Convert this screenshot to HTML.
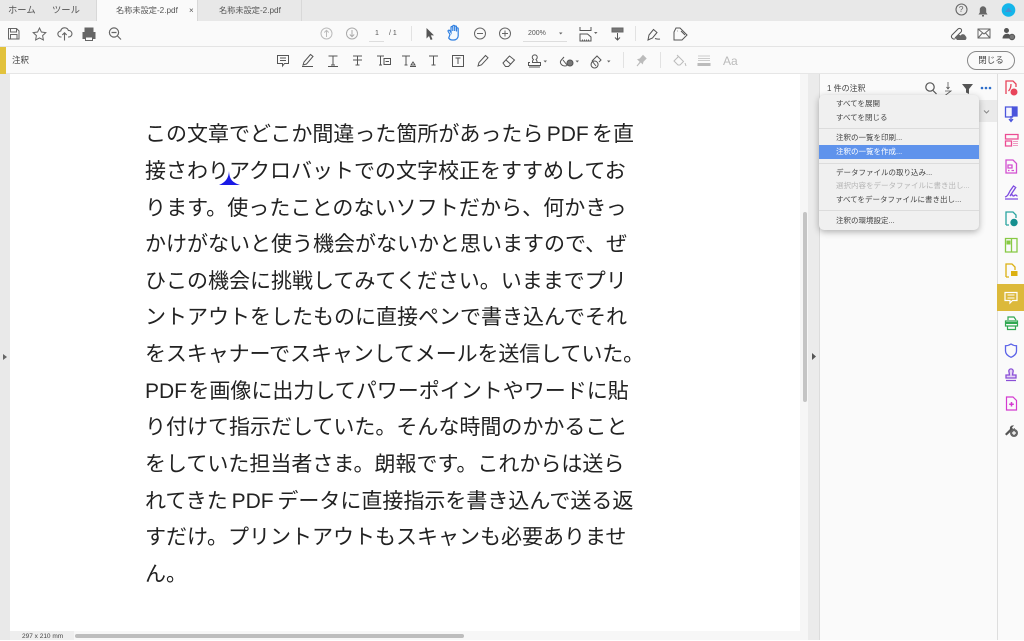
<!DOCTYPE html>
<html lang="ja"><head><meta charset="utf-8"><style>
html,body{margin:0;padding:0;width:1024px;height:640px;overflow:hidden;background:#fff;font-family:"Liberation Sans","Noto Sans CJK JP",sans-serif}
.a{position:absolute}
.t{position:absolute;white-space:nowrap}
.l{position:absolute;left:145px;white-space:nowrap;font-size:21px;line-height:36px;color:#222;font-family:"Liberation Sans","Noto Sans CJK JP",sans-serif}
.m{position:absolute;left:836px;white-space:nowrap;font-size:7.5px;line-height:12px;color:#444}
svg{position:absolute;left:0;top:0}
</style></head><body>
<div class="a" style="left:0;top:0;width:1024px;height:21px;background:#e8e8e8"></div>
<div class="a" style="left:96px;top:0;width:102px;height:21px;background:#fafafa;border-left:1px solid #d8d8d8;border-right:1px solid #d8d8d8;box-sizing:border-box"></div>
<div class="a" style="left:301px;top:0;width:1px;height:21px;background:#d8d8d8"></div>
<div class="t" style="left:8px;top:3px;font-size:9.3px;line-height:14px;color:#555">ホーム</div>
<div class="t" style="left:52px;top:3px;font-size:9.3px;line-height:14px;color:#555">ツール</div>
<div class="t" style="left:116px;top:4px;font-size:8.2px;line-height:13px;color:#555">名称未設定-2.pdf</div>
<div class="t" style="left:189px;top:4px;font-size:8px;line-height:13px;color:#555">×</div>
<div class="t" style="left:219px;top:4px;font-size:8.2px;line-height:13px;color:#555">名称未設定-2.pdf</div>
<div class="a" style="left:0;top:21px;width:1024px;height:26px;background:#fafafa;border-bottom:1px solid #e4e4e4;box-sizing:border-box"></div>
<div class="a" style="left:0;top:47px;width:1024px;height:27px;background:#fafafa;border-bottom:1px solid #e6e6e6;box-sizing:border-box"></div>
<div class="a" style="left:0;top:47px;width:6px;height:27px;background:#e2c23c"></div>
<div class="t" style="left:12px;top:54px;font-size:8.5px;line-height:13px;color:#444">注釈</div>
<div class="a" style="left:0;top:74px;width:10px;height:566px;background:#e9e9e9"></div>
<div class="a" style="left:800px;top:74px;width:8px;height:566px;background:#f6f6f6"></div>
<div class="a" style="left:803px;top:212px;width:4px;height:190px;background:#c4c4c4;border-radius:2px"></div>
<div class="a" style="left:808px;top:74px;width:12px;height:566px;background:#ebebeb;border-right:1px solid #dcdcdc;box-sizing:border-box"></div>
<div class="a" style="left:820px;top:74px;width:177px;height:566px;background:#fafafa"></div>
<div class="a" style="left:997px;top:74px;width:27px;height:566px;background:#fafafa;border-left:1px solid #dedede;box-sizing:border-box"></div>
<div class="a" style="left:10px;top:631px;width:790px;height:9px;background:#f7f7f7"></div>
<div class="a" style="left:10px;top:631px;width:64px;height:9px;background:#eeeeee"></div>
<div class="t" style="left:22px;top:632px;font-size:6.5px;line-height:9px;color:#444">297 x 210 mm</div>
<div class="a" style="left:75px;top:634px;width:389px;height:4px;background:#bdbdbd;border-radius:2px"></div>

<div class="l" style="top:117px;word-spacing:-2.5px">この文章でどこか間違った箇所があったら PDF を直</div>
<div class="l" style="top:154px">接さわりアクロバットでの文字校正をすすめしてお</div>
<div class="l" style="top:191px;letter-spacing:.08px">ります。使ったことのないソフトだから、何かきっ</div>
<div class="l" style="top:227px">かけがないと使う機会がないかと思いますので、ぜ</div>
<div class="l" style="top:264px">ひこの機会に挑戦してみてください。いままでプリ</div>
<div class="l" style="top:300px">ントアウトをしたものに直接ペンで書き込んでそれ</div>
<div class="l" style="top:337px;letter-spacing:-.1px">をスキャナーでスキャンしてメールを送信していた。</div>
<div class="l" style="top:374px;word-spacing:-4.5px">PDF を画像に出力してパワーポイントやワードに貼</div>
<div class="l" style="top:410px">り付けて指示だしていた。そんな時間のかかること</div>
<div class="l" style="top:447px">をしていた担当者さま。朗報です。これからは送ら</div>
<div class="l" style="top:484px;word-spacing:-2px">れてきた PDF データに直接指示を書き込んで送る返</div>
<div class="l" style="top:520px">すだけ。プリントアウトもスキャンも必要ありませ</div>
<div class="l" style="top:557px">ん。</div>

<div class="t" style="left:827px;top:83px;font-size:8px;line-height:12px;color:#444">1 件の注釈</div>
<div class="a" style="left:820px;top:100px;width:177px;height:22px;background:#eaeaea"></div>

<svg width="1024" height="640" viewBox="0 0 1024 640" fill="none" stroke="#666" stroke-width="1">
<!-- caret -->
<path d="M229 171 C229.500 178 231 182 240 185 L219 185 C226 182 228.500 178 229 171Z" fill="#1a1ae6" stroke="none"/>
<!-- main toolbar left -->
<path d="M8.500 28.500h8l2.500 2.500v8h-10.500zM10.500 28.500v3.500h6v-3.500M10.500 39v-4.500h6.500v4.500" />
<path d="M39.500 28l1.900 4 4.400.6-3.200 3 .8 4.400-3.900-2.100-3.900 2.100.8-4.400-3.200-3 4.400-.6z"/>
<path d="M61.500 37h-.5a3 3 0 0 1-.3-6 4 4 0 0 1 7.700-.5 3.200 3.200 0 0 1 .6 6.500h-1M64.500 40.500v-7.500M62.300 35l2.200-2.200 2.200 2.200" stroke-width="1.100"/>
<path d="M85 32v-4h8v4M83 32.500h12v6h-2.500v-2h-7v2h-2.500z" fill="#666" stroke="#666"/><path d="M85.500 37h7v3.500h-7z" fill="#fafafa"/>
<circle cx="114" cy="32.500" r="4.600" stroke-width="1.200"/><path d="M117.500 36l3.500 3.500M111.500 32.500h5" stroke-width="1.200"/>
<!-- page nav -->
<circle cx="326.500" cy="33.500" r="5.500" stroke="#bbb"/><path d="M326.500 37v-6.500M324.300 32.500l2.200-2.200 2.200 2.200" stroke="#bbb"/>
<circle cx="352" cy="33.500" r="5.500" stroke="#aaa"/><path d="M352 30v6.500M349.800 34.500l2.200 2.200 2.200-2.200" stroke="#aaa"/>
<path d="M369 41.500h15" stroke="#ddd"/>
<path d="M411.500 26v15" stroke="#e2e2e2"/>
<path d="M426.500 28v10.500l2.500-2.500 1.700 4 1.800-.8-1.700-3.800h3.200z" fill="#555" stroke="none"/>
<path d="M450 34.500l-1.800-3c-.6-1.200.9-1.900 1.600-.9l1.200 1.900v-5c0-1.300 1.800-1.300 1.800 0v3.500-4.700c0-1.300 1.900-1.300 1.900 0v4.700-4c0-1.300 1.800-1.300 1.800 0v4.500-2.800c0-1.200 1.700-1.200 1.700 0v7c0 2.500-2 4.300-4.500 4.300h-1.500c-1.600 0-2.700-.8-3.500-2z" stroke="#2f7fe0" stroke-width="1.200" fill="#f4f9fe"/>
<circle cx="480" cy="33.500" r="5.500"/><path d="M477 33.500h6"/>
<circle cx="505" cy="33.500" r="5.500"/><path d="M502 33.500h6M505 30.500v6"/>
<path d="M523 41.500h44" stroke="#ddd"/>
<path d="M559 32.500h3.500l-1.750 2z" fill="#666" stroke="none"/>
<path d="M580 27v3.500h11v-3.500M580 41v-7h7.500l3.500 3v4z" stroke="#555"/><path d="M582 40h7" stroke-dasharray="1 1"/>
<path d="M594 32h3.500l-1.750 2z" fill="#666" stroke="none"/>
<path d="M612 28h11v4h-11z" fill="#777" stroke="#666"/><path d="M617.500 33v7M615 37.500l2.500 2.500 2.500-2.500" stroke="#555"/>
<path d="M635.500 26v15" stroke="#e2e2e2"/>
<path d="M648 40l1-5 4.500-5.500 3.500 3-4.500 5.500zM655 38.500c1.500.5 3 1 5 .5" stroke="#555"/>
<path d="M674 32v8h8l5-5-7-7h-4zM677 31h.5M681 31l4 4" stroke="#555"/>
<!-- right toolbar -->
<path d="M955 38l6-6a2 2 0 0 0-3-3l-6 6a2.500 2.500 0 0 0 3.500 3.500" stroke="#555"/><path d="M957 40h8.500a2.500 2.500 0 0 0 0-4 2.800 2.800 0 0 0-5 -.5 2.500 2.500 0 0 0-3.500 4.500z" fill="#666" stroke="none"/>
<rect x="978" y="29" width="12" height="9" stroke="#666"/><path d="M978 29l6 5 6-5M978 38l4.500-5M990 38l-4.500-5"/>
<circle cx="1006.500" cy="30.500" r="2.500" fill="#555" stroke="none"/><path d="M1002.500 38.500c0-6 8-6 8-2v2z" fill="#555" stroke="none"/><circle cx="1012" cy="37" r="2.700" fill="#777" stroke="#555"/>
<!-- top right -->
<circle cx="961.500" cy="9.500" r="5.500" stroke-width="1.100"/>
<path d="M978.500 14.500h9l-1.300-2v-3a3.200 3.200 0 0 0-6.400 0v3z M982 15h2v1.500h-2z" fill="#666" stroke="none"/>
<circle cx="1008.500" cy="10" r="6.800" fill="#13b5ea" stroke="none"/><path d="M1005 12l3.500-4.500 3.500 4.500z" fill="#4a8ed0" stroke="none"/>
<!-- comment toolbar -->
<path d="M277.500 55.500h11v8h-4l-2 2.500v-2.500h-5z" stroke="#555"/><path d="M280 58h6M280 60.500h6" stroke="#555"/>
<path d="M303 65l1-3 6.500-7.500 2.500 2-6.500 7.500zM302 66.500h11" stroke="#555"/>
<path d="M328.500 56h9M333 56v9M331 65h4" stroke="#555"/><path d="M328 66.500h10" stroke="#555"/>
<path d="M353 56h9M357.500 56v9M355.500 65h4M353 60h9" stroke="#555"/>
<path d="M377 56h7M380.500 56v9M379 65h3" stroke="#555"/><rect x="384" y="58.500" width="6.500" height="6" stroke="#555"/><path d="M385.500 61.500h3.500" stroke="#555"/>
<path d="M402 56h8M406 56v9M404.500 65h3M411 65l2-3 2 3zM410 66.500h6" stroke="#555"/>
<path d="M429 56h9M433.500 56v9M431.500 65h4" stroke="#555"/>
<rect x="452.500" y="55.500" width="11" height="11" stroke="#555"/><path d="M455.500 58h5M458 58v6" stroke="#555"/>
<path d="M478 66l1-3.500 6.500-7 2.500 2.300-6.500 7z" stroke="#555"/>
<path d="M503 63l6.500-7 5 4-6 6.500h-3zM506 60l4.500 4" stroke="#555"/>
<path d="M530 62.500h-1.500v3h12v-3h-3M532.500 62.500v-1.500l1-1.500a2.500 2.500 0 1 1 2.500 0l1 1.500v1.500zM529 67h11" stroke="#555"/>
<path d="M543.500 60.500h3.500l-1.750 2z" fill="#666" stroke="none"/>
<path d="M564 57l-3 3.500c-1.500 1.800 0 5.500 4 5.500 3 0 3-2 3-2M563 60l4 5" stroke="#555"/><circle cx="570" cy="63" r="3" fill="#777" stroke="#555"/>
<path d="M575.500 60.500h3.500l-1.750 2z" fill="#666" stroke="none"/>
<path d="M592 61l5-5 4 4-2 2M596 66l-4-5M597 62a3.500 3.500 0 1 0 .1 .1" stroke="#555"/>
<path d="M607 60.500h3.500l-1.750 2z" fill="#666" stroke="none"/>
<path d="M623.500 52v16M660.500 52v16" stroke="#e2e2e2"/>
<path d="M637 66l3.500-4-2.500-2.500 2-.5 3-3.500 3 3-3 3-.5 2-2-2z" fill="#bbb" stroke="#bbb"/>
<path d="M674 61l4.500-4.500 5 5-3.500 3.500h-2zM677 55l3 3M685 63l1 3" stroke="#bbb"/>
<path d="M698 56h12M698 58.500h12M698 60.500h12" stroke="#ccc"/><path d="M698 63.500h12v2h-12z" fill="#bbb" stroke="#bbb"/>
<!-- panel icons -->
<circle cx="930" cy="87" r="4.200" stroke="#555" stroke-width="1.200"/><path d="M933 90.500l3.500 3.500" stroke="#555" stroke-width="1.200"/>
<path d="M945 91h6l-6 4.500h6M948 82v7M946.500 87l1.500 2 1.500-2" stroke="#555" stroke-width=".8"/>
<path d="M962 84h11l-4 5v5l-3-1.500v-3.500z" fill="#555" stroke="none"/>
<circle cx="982" cy="88" r="1.300" fill="#2c6dc9" stroke="none"/><circle cx="986" cy="88" r="1.300" fill="#2c6dc9" stroke="none"/><circle cx="990" cy="88" r="1.300" fill="#2c6dc9" stroke="none"/>
<!-- splitters -->
<path d="M3 354l4 3-4 3z" fill="#666" stroke="none"/>
<path d="M812 353l4 3.500-4 3.500z" fill="#555" stroke="none"/>
<!-- right rail icons -->
<g stroke-width="1.300">
<path d="M1006 94v-13h7l3 3v3" stroke="#e8445a"/><path d="M1008.500 91c2-2 2.500-5 2.500-7" stroke="#e8445a"/><circle cx="1014" cy="92" r="3.500" fill="#e8445a" stroke="none"/>
<path d="M1005.500 107h7v10h-7z" fill="#f5f5ff" stroke="#4a55dc"/><path d="M1012.500 107h4.500v9h-4.500z" fill="#4a55dc" stroke="#4a55dc"/><path d="M1011 116v5M1009 119l2 2.500 2-2.500" stroke="#4a55dc" stroke-width="1.300"/>
<path d="M1005.500 134.500h12.500v4.500h-12.500zM1005.500 141h6v5h-6z" stroke="#ec4c93"/><path d="M1013 141.500h5M1013 143.500h5M1013 145.500h5" stroke="#ee9cc2" stroke-width="1"/>
<path d="M1006 160h7l3.500 3.500v9.500h-10.500zM1008 165h4v3h-4zM1008 170.500h1.500M1011.500 170.500h2.500" stroke="#d24fd0"/>
<path d="M1005 197c2.500-.5 3.500-3 5-6l3.500-5 2.200 1.500-5.700 8.500c1-1 2-1.500 2.500-1 .5.500 0 1 1 1 1 0 1-1 2-1s1 1 2 1M1005 199h13" stroke="#7d4be0"/>
<path d="M1006 225v-13h7l3 3v3M1006 225h3" stroke="#2aa5a0"/><circle cx="1014" cy="222.500" r="3.700" fill="#158f8f" stroke="none"/>
<path d="M1005.500 238.500h11.500v13.500h-11.500zM1011.500 238.500v13.500" stroke="#87c944"/><path d="M1006.500 240.500h4v4h-4z" fill="#87c944" stroke="none"/>
<path d="M1006 277v-13h6l3 3v3M1006 277h3" stroke="#dcb012"/><path d="M1011 271h6.500v5h-6.500z" fill="#dcb012" stroke="none"/>
</g>
<path d="M997 284h27v27h-27z" fill="#dcb93a" stroke="none"/>
<path d="M1005 292.500h12v8h-4.500l-2.500 2.500v-2.500h-5z" stroke="#fff" stroke-width="1.200" fill="#dcb93a"/><path d="M1007.500 295h7M1007.500 298h7" stroke="#fff"/>
<g stroke-width="1.200">
<path d="M1008 320v-3h6l2 3M1005.500 321h12v5h-12zM1007.500 326v3.500h8v-3.500" stroke="#32a852"/><path d="M1005.500 323h12" stroke="#32a852" stroke-width="2"/>
<path d="M1011 344c2 1.300 4 1.800 5.500 1.800v5.200c0 3-2.500 5-5.500 6.300-3-1.300-5.500-3.300-5.500-6.300v-5.200c1.500 0 3.500-.5 5.500-1.800z" stroke="#5b62e8" stroke-width="1.300"/>
<path d="M1009 372a2.200 2.200 0 1 1 4 0l-.5 3h3.500v3h-10v-3h3.500zM1006 380.500h10" stroke="#8a4fd6" stroke-width="1.300" fill="#e4d4f6"/>
<path d="M1006.500 397h6.500l3.500 3.500v9.500h-10z" stroke="#d43ad0"/><path d="M1011.500 402v4.500M1009.200 404.200h4.600" stroke="#d43ad0" stroke-width="1.500"/>
<path d="M1005 434l5-5c-.5-2 1-4 4-3.500l-2 2 1 1.500 2-1c0 2-2 3.500-3.500 3l-5 4.500z" fill="#555" stroke="none"/><circle cx="1014" cy="433" r="3.400" fill="#666" stroke="#666"/><path d="M1012 433h4M1014 431v4" stroke="#fff"/>
</g>
</svg>
<div class="t" style="left:958.800px;top:4px;font-size:8.500px;line-height:11px;color:#666">?</div>
<div class="t" style="left:375px;top:29px;font-size:7px;line-height:10px;color:#555">1</div>
<div class="t" style="left:389px;top:29px;font-size:7px;line-height:10px;color:#555">/ 1</div>
<div class="t" style="left:528px;top:29px;font-size:7px;line-height:10px;color:#555">200%</div>
<div class="t" style="left:723px;top:54px;font-size:12px;line-height:14px;color:#bbb">Aa</div>
<div class="a" style="left:967px;top:51px;width:48px;height:19px;border:1px solid #888;border-radius:10px;box-sizing:border-box;background:#fafafa;text-align:center;font-size:8.500px;line-height:17px;color:#444">閉じる</div>

<!-- menu -->
<div class="a" style="left:819px;top:95px;width:160px;height:135px;background:#f0f0f0;border-radius:5px;box-shadow:0 2px 7px rgba(0,0,0,.3)"></div>
<div class="a" style="left:819px;top:145px;width:160px;height:14px;background:#5f93ec"></div>
<div class="a" style="left:819px;top:128px;width:160px;height:1px;background:#dcdcdc"></div>
<div class="a" style="left:819px;top:163px;width:160px;height:1px;background:#dcdcdc"></div>
<div class="a" style="left:819px;top:210px;width:160px;height:1px;background:#dcdcdc"></div>
<div class="m" style="top:98px">すべてを展開</div>
<div class="m" style="top:112px">すべてを閉じる</div>
<div class="m" style="top:132px">注釈の一覧を印刷...</div>
<div class="m" style="top:146px;color:#fff">注釈の一覧を作成...</div>
<div class="m" style="top:167px">データファイルの取り込み...</div>
<div class="m" style="top:180px;color:#b5b5b5">選択内容をデータファイルに書き出し...</div>
<div class="m" style="top:194px">すべてをデータファイルに書き出し...</div>
<div class="m" style="top:215px">注釈の環境設定...</div>
<svg width="1024" height="640" viewBox="0 0 1024 640" fill="none"><path d="M984 110.500l2.500 2.500 2.500-2.500" stroke="#888"/></svg>
</body></html>
